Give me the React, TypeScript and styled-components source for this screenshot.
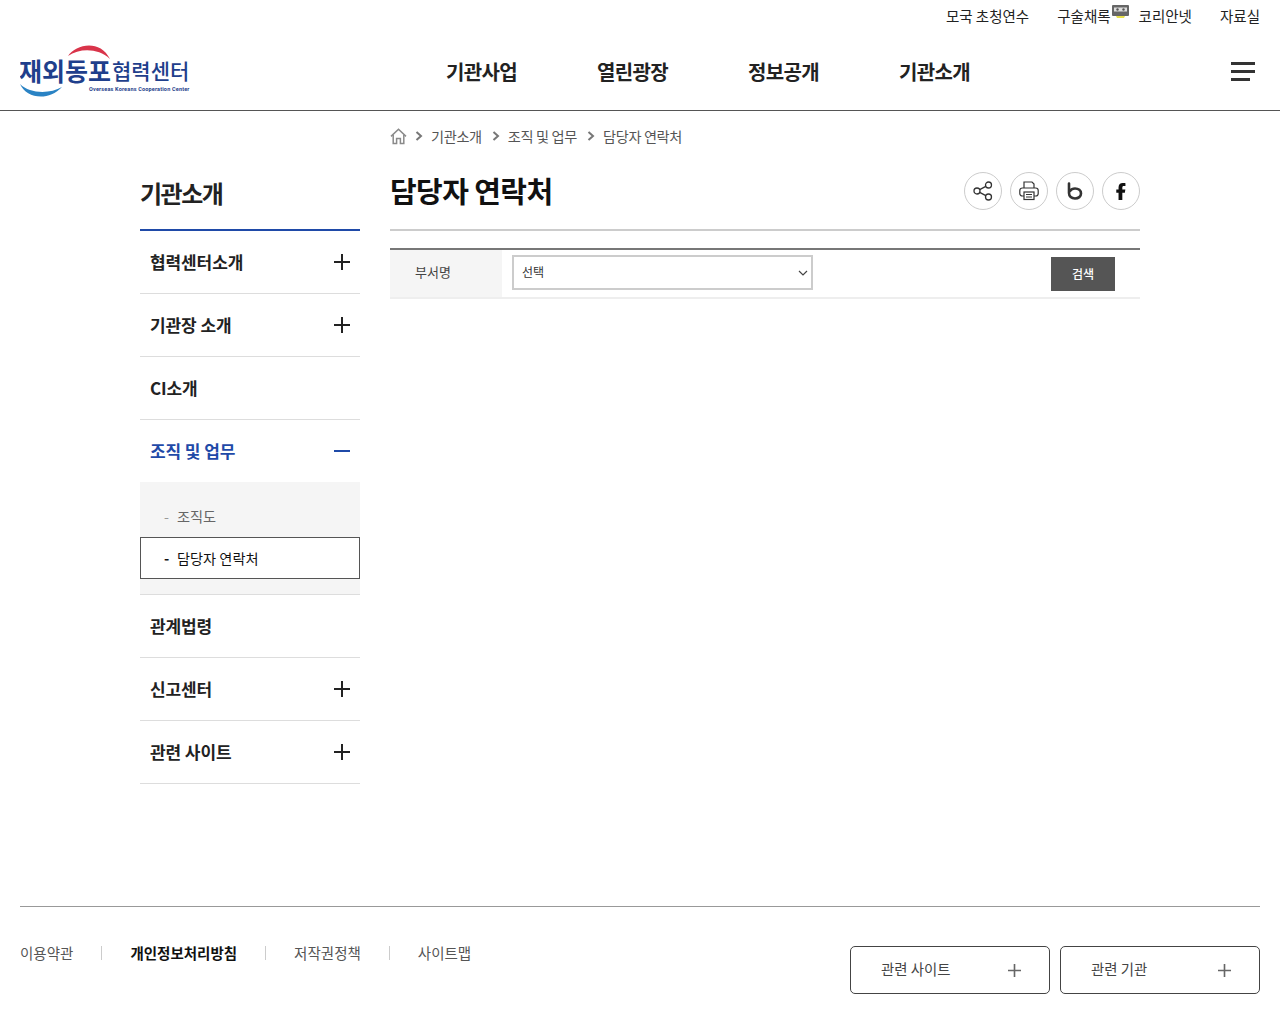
import styled, { createGlobalStyle } from "styled-components";

const GlobalStyle = createGlobalStyle`
  * {
    box-sizing: border-box;
  }

  body {
    margin: 0;
    background: #fff;
    color: #222;
    font-family: "Noto Sans CJK KR", "Noto Sans", sans-serif;
  }

  a {
    color: inherit;
    text-decoration: none;
  }
`;

const utilLinks = ["모국 초청연수", "구술채록", "코리안넷", "자료실"];
const navLinks = ["기관사업", "열린광장", "정보공개", "기관소개"];
const footerLinks = ["이용약관", "개인정보처리방침", "저작권정책", "사이트맵"];

const Logo = () => (
  <svg width="172" height="58" viewBox="0 0 172 58" aria-label="재외동포협력센터">
    <path d="M48 14 C56 2 80 -3 90 17 C78 6 60 6 48 14Z" fill="#d9344a" />
    <path d="M0 42 C6 56 28 60 42 45 C30 52 10 52 0 42Z" fill="#2a83c4" />
    <text x="-1" y="39" fontSize="25" fontWeight="700" fill="#1f3f8c">
      재외동포
    </text>
    <text x="92" y="37" fontSize="21" fontWeight="500" fill="#1f3f8c">
      협력센터
    </text>
    <text x="69" y="49" fontSize="5.5" fontWeight="700" fill="#1f3f8c" fontFamily="Roboto, sans-serif" letterSpacing="0.18">
      Overseas Koreans Cooperation Center
    </text>
  </svg>
);

const CassetteIcon = () => (
  <CassetteSvg width="17" height="13" viewBox="0 0 17 13">
    <rect x="0" y="0" width="17" height="11" rx="1" fill="#666" />
    <rect x="2" y="2.5" width="13" height="4" fill="#ddd" />
    <circle cx="5.5" cy="4.5" r="1.2" fill="#555" />
    <circle cx="11.5" cy="4.5" r="1.2" fill="#555" />
    <path d="M4 11 L13 11 L12 13 L5 13Z" fill="#e8e04a" />
  </CassetteSvg>
);

const HomeIcon = () => (
  <svg width="17" height="17" viewBox="0 0 17 17" fill="none" stroke="#8a8a8a" strokeWidth="1.5">
    <path d="M1 8.4 L8.5 1.2 L16 8.4" />
    <path d="M3.2 7 V15.6 H6.6 V10.6 H10.4 V15.6 H13.8 V7" />
  </svg>
);

const Chevron = () => (
  <svg width="8" height="10" viewBox="0 0 8 10" fill="none" stroke="#777" strokeWidth="2">
    <path d="M1.5 1 L6 5 L1.5 9" />
  </svg>
);

const ShareIcon = () => (
  <svg width="20" height="20" viewBox="0 0 20 20" fill="none" stroke="#333" strokeWidth="1.3">
    <circle cx="4" cy="10" r="3" />
    <circle cx="15.5" cy="4" r="3" />
    <circle cx="15.5" cy="16" r="3" />
    <path d="M6.7 8.6 L12.8 5.4 M6.7 11.4 L12.8 14.6" />
  </svg>
);

const PrintIcon = () => (
  <svg width="20" height="20" viewBox="0 0 20 20" fill="none" stroke="#333" strokeWidth="1.2">
    <path d="M5 7 V1 H13 L15 3 V7" />
    <rect x="0.8" y="7" width="18.4" height="8" rx="2.5" />
    <rect x="5" y="11" width="10" height="7.5" fill="#fff" />
    <path d="M7 13.5 H13 M7 16 H13" />
  </svg>
);

const BlogIcon = () => (
  <svg width="16" height="18" viewBox="0 0 16 18" fill="none" stroke="#333" strokeWidth="2.6" strokeLinecap="round">
    <path d="M2 1.5 V11 C2 14.5 4.5 16.5 8 16.5 C11.5 16.5 14 14.5 14 11.5 C14 8.5 11.5 6.5 8 6.5 C6 6.5 4 7.5 3 9" />
  </svg>
);

const FacebookIcon = () => (
  <svg width="10" height="17" viewBox="0 0 10 18" fill="#111">
    <path d="M2.4 18 V10.4 H0 V6.8 H2.4 V4.4 C2.4 1.6 4.2 0 6.8 0 C8.1 0 9.2 0.1 9.7 0.2 V3.2 H8 C6.7 3.2 6.4 3.8 6.4 4.8 V6.8 H9.6 L9.1 10.4 H6.4 V18Z" />
  </svg>
);

const PlusIcon = ({ size, color }: { size: number; color: string }) => (
  <svg width={size} height={size} viewBox="0 0 16 16" stroke={color} strokeWidth="2">
    <path d="M8 0 V16 M0 8 H16" />
  </svg>
);

const MinusIcon = () => (
  <svg width="16" height="16" viewBox="0 0 16 16" stroke="#1f4aa8" strokeWidth="2">
    <path d="M0 8 H16" />
  </svg>
);

const sideMenu = [
  { label: "협력센터소개", icon: true },
  { label: "기관장 소개", icon: true },
  { label: "CI소개", icon: false },
];

const sideMenuAfter = [
  { label: "관계법령", icon: false },
  { label: "신고센터", icon: true },
  { label: "관련 사이트", icon: true },
];

export default function App() {
  return (
    <Page>
      <GlobalStyle />
      <Header>
        <UtilBar>
          {utilLinks.map((link) => (
            <UtilLink href="#" key={link}>
              {link}
              {link === "구술채록" && <CassetteIcon />}
            </UtilLink>
          ))}
        </UtilBar>
        <MainBar>
          <LogoLink href="#">
            <Logo />
          </LogoLink>
          <Nav>
            {navLinks.map((link) => (
              <NavLink href="#" key={link}>
                {link}
              </NavLink>
            ))}
          </Nav>
          <Burger aria-label="전체메뉴">
            <BurgerLine />
            <BurgerLine />
            <BurgerLine $short />
          </Burger>
        </MainBar>
      </Header>

      <Body>
        <Sidebar>
          <SideTitle>기관소개</SideTitle>
          <SideList>
            {sideMenu.map((item) => (
              <SideItem key={item.label}>
                <SideLabel>{item.label}</SideLabel>
                {item.icon && <PlusIcon size={16} color="#222" />}
              </SideItem>
            ))}
            <SideItem $active $open>
              <SideLabel>조직 및 업무</SideLabel>
              <MinusIcon />
            </SideItem>
            <SubList>
              <SubItem>
                <SubDash>-</SubDash>조직도
              </SubItem>
              <SubItem $current>
                <SubDash $current>-</SubDash>담당자 연락처
              </SubItem>
            </SubList>
            {sideMenuAfter.map((item) => (
              <SideItem key={item.label}>
                <SideLabel>{item.label}</SideLabel>
                {item.icon && <PlusIcon size={16} color="#222" />}
              </SideItem>
            ))}
          </SideList>
        </Sidebar>

        <Content>
          <Breadcrumb>
            <HomeIcon />
            <Chevron />
            <span>기관소개</span>
            <Chevron />
            <span>조직 및 업무</span>
            <Chevron />
            <span>담당자 연락처</span>
          </Breadcrumb>
          <TitleRow>
            <PageTitle>담당자 연락처</PageTitle>
            <Actions>
              <ActionButton aria-label="공유">
                <ShareIcon />
              </ActionButton>
              <ActionButton aria-label="인쇄">
                <PrintIcon />
              </ActionButton>
              <ActionButton aria-label="블로그">
                <BlogIcon />
              </ActionButton>
              <ActionButton aria-label="페이스북">
                <FacebookIcon />
              </ActionButton>
            </Actions>
          </TitleRow>
          <SearchRow>
            <SearchLabel>부서명</SearchLabel>
            <SearchField>
              <DeptSelect defaultValue="">
                <option value="">선택</option>
              </DeptSelect>
              <SearchButton>검색</SearchButton>
            </SearchField>
          </SearchRow>
        </Content>
      </Body>

      <Footer>
        <FooterLinks>
          {footerLinks.map((link, i) => (
            <FooterLink href="#" key={link} $strong={i === 1}>
              {link}
            </FooterLink>
          ))}
        </FooterLinks>
        <FooterButtons>
          <FooterButton>
            <FooterLabel>관련 사이트</FooterLabel>
            <PlusIcon size={13} color="#666" />
          </FooterButton>
          <FooterButton>
            <FooterLabel>관련 기관</FooterLabel>
            <PlusIcon size={13} color="#666" />
          </FooterButton>
        </FooterButtons>
      </Footer>
    </Page>
  );
}

const Page = styled.div`
  width: 1280px;
  height: 1024px;
  display: flex;
  flex-direction: column;
  overflow: hidden;
`;

const Header = styled.header`
  height: 111px;
  border-bottom: 1px solid #555;
`;

const UtilBar = styled.div`
  height: 32px;
  display: flex;
  justify-content: flex-end;
  align-items: center;
  gap: 28px;
  padding-right: 20px;
`;

const UtilLink = styled.a`
  position: relative;
  display: block;
  font-size: 14.5px;
  line-height: 20px;
  color: #222;
`;

const CassetteSvg = styled.svg`
  position: absolute;
  left: calc(100% + 1px);
  top: -1px;
`;

const MainBar = styled.div`
  height: 78px;
  display: flex;
  align-items: center;
  padding: 1px 25px 0 20px;
`;

const LogoLink = styled.a`
  display: flex;
  width: 172px;
  margin-top: -2px;
`;

const Nav = styled.nav`
  display: flex;
  gap: 79px;
  margin-left: 254px;
  flex: 1;
`;

const NavLink = styled.a`
  width: 72px;
  font-size: 20px;
  line-height: 28px;
  font-weight: 700;
  color: #222;
  white-space: nowrap;
  letter-spacing: -0.65px;
`;

const Burger = styled.button`
  width: 24px;
  display: flex;
  flex-direction: column;
  gap: 5px;
  padding: 0;
  border: 0;
  background: none;
`;

const BurgerLine = styled.span<{ $short?: boolean }>`
  display: block;
  height: 3px;
  width: ${(props) => (props.$short ? "19px" : "24px")};
  background: #333;
`;

const Body = styled.main`
  flex: 1;
  display: flex;
  gap: 30px;
  padding: 0 140px;
`;

const Sidebar = styled.aside`
  width: 220px;
  padding-top: 64px;
`;

const SideTitle = styled.h2`
  height: 56px;
  margin: 0;
  font-size: 24px;
  line-height: 36px;
  font-weight: 700;
  color: #222;
  letter-spacing: -1.5px;
  border-bottom: 2px solid #1f4aa8;
`;

const SideList = styled.div`
  display: flex;
  flex-direction: column;
`;

const SideItem = styled.div<{ $active?: boolean; $open?: boolean }>`
  height: ${(props) => (props.$open ? "62px" : "63px")};
  display: flex;
  align-items: center;
  justify-content: space-between;
  padding: 0 10px;
  font-size: 17px;
  font-weight: 700;
  letter-spacing: -0.1px;
  color: ${(props) => (props.$active ? "#1f4aa8" : "#222")};
  border-bottom: ${(props) => (props.$open ? "0" : "1px solid #ddd")};
`;

const SideLabel = styled.span`
  margin-bottom: 2px;
`;

const SubList = styled.div`
  height: 113px;
  display: flex;
  flex-direction: column;
  justify-content: flex-end;
  padding-bottom: 15px;
  background: #f5f5f5;
  border-bottom: 1px solid #ddd;
`;

const SubItem = styled.div<{ $current?: boolean }>`
  height: 42px;
  display: flex;
  align-items: center;
  padding-left: 23px;
  font-size: 14.2px;
  color: ${(props) => (props.$current ? "#111" : "#666")};
  background: ${(props) => (props.$current ? "#fff" : "transparent")};
  border: 1px solid ${(props) => (props.$current ? "#555" : "transparent")};
`;

const SubDash = styled.span<{ $current?: boolean }>`
  width: 13px;
  font-weight: ${(props) => (props.$current ? 700 : 400)};
  color: ${(props) => (props.$current ? "#111" : "#999")};
`;

const Content = styled.section`
  width: 750px;
`;

const Breadcrumb = styled.div`
  height: 50px;
  display: flex;
  align-items: center;
  gap: 8px;
  font-size: 14.2px;
  letter-spacing: -0.35px;
  color: #555;

  span {
    margin-right: 2px;
  }
`;

const TitleRow = styled.div`
  height: 70px;
  display: flex;
  align-items: flex-start;
  justify-content: space-between;
  padding-top: 9px;
  border-bottom: 2px solid #ccc;
`;

const PageTitle = styled.h1`
  margin: 0;
  font-size: 29px;
  line-height: 40px;
  font-weight: 700;
  color: #111;
  letter-spacing: -0.6px;
`;

const Actions = styled.div`
  display: flex;
  gap: 8px;
  margin-top: 2px;
`;

const ActionButton = styled.button`
  width: 38px;
  height: 38px;
  display: flex;
  align-items: center;
  justify-content: center;
  padding: 0;
  background: #fff;
  border: 1px solid #ccc;
  border-radius: 50%;
`;

const SearchRow = styled.div`
  height: 51px;
  margin-top: 17px;
  display: flex;
  border-top: 2px solid #777;
  border-bottom: 2px solid #eee;
`;

const SearchLabel = styled.div`
  width: 112px;
  display: flex;
  align-items: center;
  padding: 0 0 5px 25px;
  font-size: 13px;
  color: #444;
  background: #f5f5f5;
`;

const SearchField = styled.div`
  flex: 1;
  display: flex;
  align-items: center;
  justify-content: space-between;
  padding: 0 25px 0 10px;
`;

const DeptSelect = styled.select`
  appearance: none;
  width: 301px;
  height: 35px;
  margin-bottom: 2px;
  padding: 0 0 2px 8px;
  font-family: inherit;
  font-size: 12px;
  color: #333;
  background: #fff url("data:image/svg+xml,%3Csvg xmlns='http://www.w3.org/2000/svg' width='10' height='6'%3E%3Cpath d='M1 1l4 4 4-4' fill='none' stroke='%23444' stroke-width='1.2'/%3E%3C/svg%3E") no-repeat right 3px center;
  border: 2px solid #ccc;
  border-radius: 0;
`;

const SearchButton = styled.button`
  width: 64px;
  height: 34px;
  padding: 0 0 1px;
  font-family: inherit;
  font-size: 12px;
  font-weight: 500;
  color: #fff;
  background: #555;
  border: 0;
`;

const Footer = styled.footer`
  height: 118px;
  margin: 0 20px;
  display: flex;
  justify-content: space-between;
  padding-top: 39px;
  border-top: 1px solid #999;
`;

const FooterLinks = styled.div`
  display: flex;
  align-items: flex-start;
  margin-top: -1px;
`;

const FooterLink = styled.a<{ $strong?: boolean }>`
  position: relative;
  display: block;
  font-size: 14.5px;
  line-height: 16px;
  padding: 0 29px 0 28px;
  font-weight: ${(props) => (props.$strong ? 700 : 400)};
  color: ${(props) => (props.$strong ? "#111" : "#555")};

  &:first-child {
    padding-left: 0;
  }

  &:not(:last-child)::after {
    content: "";
    position: absolute;
    right: 0;
    top: 1px;
    width: 1px;
    height: 14px;
    background: #ccc;
  }
`;

const FooterButtons = styled.div`
  display: flex;
  gap: 10px;
`;

const FooterButton = styled.button`
  width: 200px;
  height: 48px;
  display: flex;
  align-items: center;
  justify-content: space-between;
  padding: 1px 28px 0 30px;
  font-family: inherit;
  font-size: 14.4px;
  color: #444;
  background: #fff;
  border: 1px solid #444;
  border-radius: 5px;
`;

const FooterLabel = styled.span`
  margin-bottom: 5px;
`;
